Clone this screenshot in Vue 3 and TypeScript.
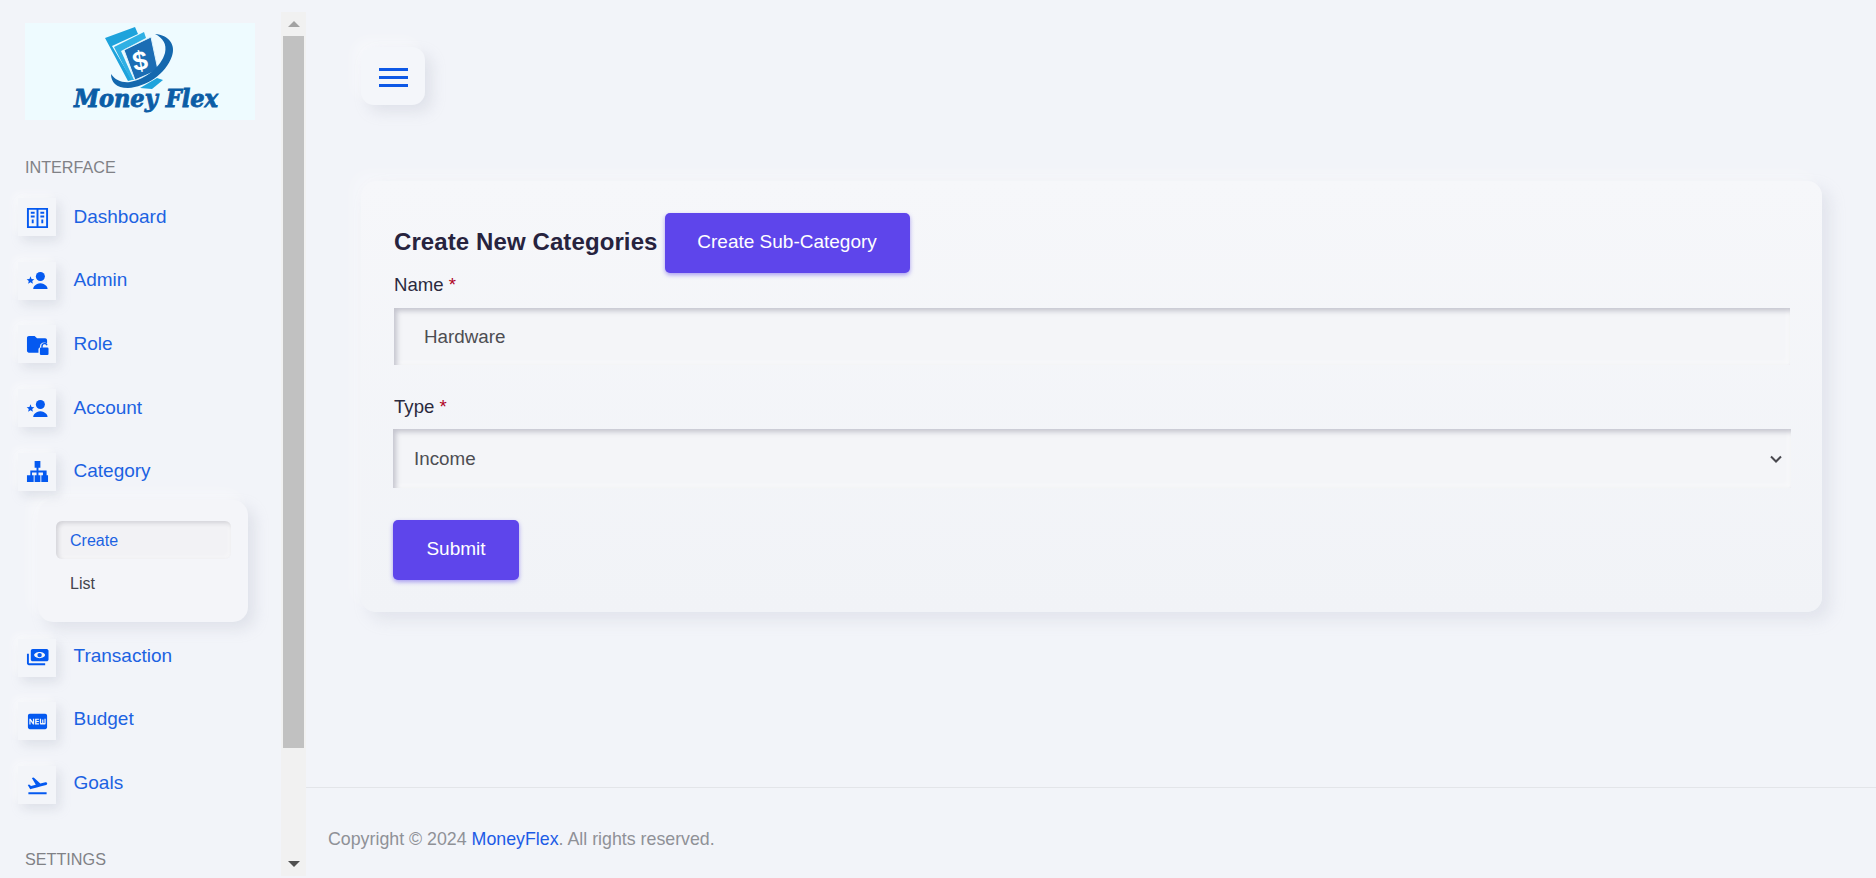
<script setup lang="ts">
interface NavItem {
  label: string
  icon: string
}
const upper: NavItem[] = [
  { label: 'Dashboard', icon: 'dash' },
  { label: 'Admin', icon: 'star' },
  { label: 'Role', icon: 'folder' },
  { label: 'Account', icon: 'star' },
  { label: 'Category', icon: 'tree' },
]
const lower: NavItem[] = [
  { label: 'Transaction', icon: 'pay' },
  { label: 'Budget', icon: 'new' },
  { label: 'Goals', icon: 'fly' },
]
</script>

<template>
  <div class="page">
    <aside class="side">
      <div class="side-content">
        <svg class="logo" viewBox="25 23 230 97" role="img" aria-label="Money Flex">
          <rect x="25" y="23" width="230" height="97" fill="#eefbff" />
          <polygon points="105,38 135,27 138,34 112,46 132,80 128,81" fill="#1ea3dc" />
          <polygon points="114,47 144,32 146,38 121,51 134,80 131,80" fill="#2fb0e4" />
          <polygon points="140,88 157,78 163,80 152,89" fill="#1ea3dc" />
          <polygon points="124,50 151,37 158,70 135,80" fill="#1b6db4" stroke="#dff4fc" stroke-width="1" />
          <path d="M155 34C169 35 176 45 172 56C166 74 146 87 128 88C116 88 111 82 111 74C115 80 122 83 130 82C146 79 161 67 165 53C167 44 163 38 155 34Z" fill="#1468ae" />
          <text x="140" y="70" class="logo-dollar" transform="rotate(-10 140 60)" text-anchor="middle">$</text>
          <text x="74" y="107" class="logo-text" textLength="144" lengthAdjust="spacingAndGlyphs">Money Flex</text>
        </svg>

        <div class="section-title first">INTERFACE</div>
        <nav class="nav">
          <a v-for="item in upper" :key="item.label" class="nav-row">
            <span class="nav-icon">
              <svg viewBox="0 0 24 24" class="ico">
                <template v-if="item.icon === 'dash'">
                  <path d="M1 2h22v21H1zM3 4v17h8V4zm10 0v17h8V4z" fill-rule="evenodd" />
                  <path d="M5 6h4v2H5zM5 10h4v2H5zM6 14h2v4H6zM15 6h4v2h-4zM15 10h4v2h-4zM16 14h2v4h-2z" />
                </template>
                <template v-else-if="item.icon === 'star'">
                  <circle cx="15" cy="7.800" r="4.700" />
                  <path d="M7.500 20.800c0-1 .3-2 1.200-3 1.500-1.900 4-3 6.300-3s4.800 1.100 6.300 3c.9 1 1.200 2 1.200 3z" />
                  <polygon points="4.700,7.500 5.800,10.400 8.700,10.600 6.500,12.500 7.200,15.400 4.700,13.800 2.200,15.400 2.900,12.500 .7,10.600 3.600,10.400" />
                </template>
                <template v-else-if="item.icon === 'folder'">
                  <path d="M3 3h6l2.500 2.500H20c1 0 2 .9 2 2v3.500a4.500 4.500 0 0 0-7.500 3.500v.5c-.8.3-1.500 1.100-1.500 2.200v3.300H3c-1 0-2-.9-2-2V5c0-1.100.9-2 2-2z" />
                  <rect x="14.500" y="15.200" width="9" height="7.800" rx="1.200" />
                  <path d="M16.700 15.500v-1.800a2.700 2.700 0 0 1 5.200-1" fill="none" stroke="#0459f0" stroke-width="1.500" />
                </template>
                <template v-else-if="item.icon === 'tree'">
                  <path d="M9 1h6v7h-2v3h8.500v5H23v7h-7v-7h1.700v-3H13v3h2v7H9v-7h2v-3H6.300v3H8v7H1v-7h3.500v-5H11V8H9z" />
                </template>
                <template v-else>
                  <path d="M9 1h6v6H9z" />
                </template>
              </svg>
            </span>
            <span class="nav-label">{{ item.label }}</span>
          </a>
        </nav>

        <div class="sub">
          <a class="sub-item active">Create</a>
          <a class="sub-item">List</a>
        </div>

        <nav class="nav lower">
          <a v-for="item in lower" :key="item.label" class="nav-row">
            <span class="nav-icon">
              <svg viewBox="0 0 24 24" class="ico">
                <template v-if="item.icon === 'pay'">
                  <path fill-rule="evenodd" d="M5 5c0-1.100.9-2 2-2h14.500c1.100 0 2 .9 2 2v9c0 1.100-.9 2-2 2H7c-1.100 0-2-.9-2-2zm9.200 1.200c-3.200 0-5.700 1.800-5.700 3.300s2.500 3.300 5.700 3.300 5.700-1.800 5.700-3.300-2.500-3.300-5.700-3.300z" />
                  <circle cx="14.200" cy="9.500" r="2.300" />
                  <path d="M1 8h2v10h17v2H3c-1.100 0-2-.9-2-2z" />
                </template>
                <path v-else-if="item.icon === 'new'" d="M20 4H4c-1.110 0-1.990.89-1.990 2L2 18c0 1.110.89 2 2 2h16c1.110 0 2-.89 2-2V6c0-1.110-.89-2-2-2zM8.500 15H7.300l-2.550-3.500V15H3.500V9h1.250l2.500 3.500V9H8.500v6zm5-4.740H11v1.120h2.500v1.260H11v1.110h2.500V15h-4V9h4v1.260zm7 3.740c0 .55-.45 1-1 1h-4c-.55 0-1-.45-1-1V9h1.250v4.510h1.130V9.990h1.250v3.510h1.120V9h1.250v5z" />
                <path v-else d="M2.500 19h19v2h-19v-2zm19.570-9.360c-.21-.8-1.040-1.280-1.840-1.060L14.920 10l-6.900-6.430-1.930.51 4.140 7.170-4.970 1.330-1.970-1.540-1.450.39 1.820 3.160.77 1.330 1.600-.43 5.310-1.420 4.350-1.160L21 11.490c.81-.23 1.280-1.050 1.070-1.850z" />
              </svg>
            </span>
            <span class="nav-label">{{ item.label }}</span>
          </a>
        </nav>

        <div class="section-title second">SETTINGS</div>
      </div>

      <div class="scrollbar">
        <div class="arrow-box"><span class="arrow up"></span></div>
        <div class="thumb"></div>
        <div class="track-rest"></div>
        <div class="arrow-box"><span class="arrow down"></span></div>
      </div>
    </aside>

    <main class="main">
      <div class="main-body">
        <button class="burger" type="button" aria-label="Menu">
          <span></span><span></span><span></span>
        </button>

        <section class="card">
          <div class="card-head">
            <h2 class="card-title">Create New Categories</h2>
            <button class="btn head-btn" type="button">Create Sub-Category</button>
          </div>
          <label class="field-label name-label">Name <em>*</em></label>
          <input class="control text-input" value="Hardware" />
          <label class="field-label type-label">Type <em>*</em></label>
          <div class="select-wrap">
            <select class="control select-input">
              <option>Income</option>
              <option>Expense</option>
            </select>
            <svg class="chevron" viewBox="0 0 12 8"><path d="M1 1.500l5 5 5-5" /></svg>
          </div>
          <button class="btn submit-btn" type="button">Submit</button>
        </section>
      </div>

      <footer class="footer">
        Copyright © 2024 <a class="brand">MoneyFlex</a>. All rights reserved.
      </footer>
    </main>
  </div>
</template>

<style scoped>
.page {
  display: flex;
  height: 878px;
  overflow: hidden;
  background: #f2f4f9;
  font-family: "Liberation Sans", Arial, sans-serif;
  color: #2b2a3d;
}
.side {
  width: 306px;
  flex: none;
  display: flex;
  overflow: hidden;
}
.side-content {
  width: 281px;
  flex: none;
  padding: 23px 0 0 25px;
  box-sizing: border-box;
}
.logo {
  display: block;
  width: 230px;
  height: 97px;
}
.logo-dollar {
  font: 700 27px "Liberation Sans", Arial, sans-serif;
  fill: #fff;
}
.logo-text {
  font: italic 900 25px "DejaVu Serif", serif;
  fill: #0b5da6;
  stroke: #0b5da6;
  stroke-width: .9px;
}
.section-title {
  font-size: 16.2px;
  line-height: 18px;
  color: #808186;
}
.section-title.first {
  margin-top: 38px;
}
.section-title.second {
  margin-top: 46px;
}
.nav {
  display: flex;
  flex-direction: column;
  gap: 25.7px;
  margin: 22px 0 0 -7px;
}
.nav.lower {
  margin-top: 17px;
}
.nav-row {
  display: flex;
  align-items: center;
  gap: 17.500px;
  height: 38px;
}
.nav-icon {
  width: 38px;
  height: 38px;
  flex: none;
  display: flex;
  align-items: center;
  justify-content: center;
  background: #f3f5f9;
  box-shadow: 4px 5px 10px rgba(170, 175, 190, .28), -4px -4px 8px rgba(255, 255, 255, .55);
}
.ico {
  width: 23px;
  height: 23px;
  fill: #0459f0;
}
.nav-label {
  font-size: 19px;
  line-height: 20px;
  color: #1c62e2;
  position: relative;
  top: -.5px;
}
.lower .nav-label {
  top: -2px;
}
.sub {
  width: 210px;
  height: 122px;
  margin: 9px 0 0 13px;
  padding: 21px 17px 0 18px;
  box-sizing: border-box;
  border-radius: 15px;
  background: #f4f5f9;
  box-shadow: 7px 7px 14px rgba(170, 175, 190, .25), -7px -7px 14px rgba(255, 255, 255, .45);
}
.sub-item {
  display: flex;
  align-items: center;
  height: 38px;
  padding: 2px 0 0 14px;
  box-sizing: border-box;
  font-size: 16px;
  color: #44444c;
  border-radius: 6px;
}
.sub-item.active {
  color: #1c62e2;
  margin-bottom: 5px;
  background: #f2f2f5;
  box-shadow: inset 2px 2px 4px rgba(160, 160, 170, .4), inset -2px -2px 4px rgba(255, 255, 255, .4);
}
.scrollbar {
  width: 25px;
  height: 864px;
  margin-top: 12px;
  flex: none;
  display: flex;
  flex-direction: column;
  background: #f1f1f1;
}
.arrow-box {
  height: 24px;
  flex: none;
  display: flex;
  align-items: center;
  justify-content: center;
}
.arrow {
  width: 0;
  height: 0;
  border-left: 6px solid transparent;
  border-right: 6px solid transparent;
}
.arrow.up {
  border-bottom: 6px solid #a3a3a3;
}
.arrow.down {
  border-top: 6px solid #505050;
}
.thumb {
  height: 712px;
  width: 21px;
  margin-left: 2px;
  background: #c1c1c1;
}
.track-rest {
  flex: 1;
}
.main {
  flex: 1;
  min-width: 0;
  display: flex;
  flex-direction: column;
}
.main-body {
  flex: 1;
  padding: 47px 54px 0 55px;
}
.burger {
  width: 64px;
  height: 58px;
  display: flex;
  flex-direction: column;
  gap: 5px;
  align-items: center;
  justify-content: center;
  padding: 2px 0 0;
  border: none;
  border-radius: 13px;
  background: #f4f6fa;
  box-shadow: 7px 7px 14px rgba(170, 175, 190, .25), -7px -7px 14px rgba(255, 255, 255, .4);
}
.burger span {
  width: 29px;
  height: 3px;
  background: #0d58e6;
}
.card {
  margin-top: 76px;
  height: 431px;
  box-sizing: border-box;
  padding: 32px 32px 0 33px;
  border-radius: 15px;
  background: linear-gradient(#f6f7fa, #f1f3f7);
  box-shadow: 8px 8px 16px rgba(170, 175, 190, .22), -8px -8px 16px rgba(255, 255, 255, .3);
}
.card-head {
  display: flex;
  align-items: center;
  gap: 7px;
}
.card-title {
  margin: 0;
  font-size: 24px;
  font-weight: 700;
  letter-spacing: .1px;
  line-height: 28px;
  color: #27233e;
  position: relative;
  top: -1px;
}
.btn {
  border: none;
  border-radius: 5px;
  background: #5e45eb;
  color: #fff;
  font-family: inherit;
  font-size: 19px;
  box-shadow: 0 2px 4px rgba(94, 69, 235, .5);
}
.head-btn {
  width: 245px;
  height: 60px;
  padding: 0 0 2px;
}
.field-label {
  display: block;
  font-size: 18.600px;
  line-height: 20px;
  color: #2b2a3d;
}
.field-label em {
  font-style: normal;
  color: #b0021f;
}
.name-label {
  margin-top: 2px;
}
.type-label {
  margin-top: 32px;
}
.control {
  display: block;
  box-sizing: border-box;
  border: none;
  outline: none;
  font-family: inherit;
  font-size: 18.800px;
  color: #4d4d52;
  background: #f4f5f8;
  box-shadow: inset 3px 3px 5px rgba(150, 150, 165, .5), inset -3px -3px 5px rgba(255, 255, 255, .45);
}
.text-input {
  width: 1396px;
  height: 57px;
  margin-top: 13px;
  padding-left: 30px;
}
.select-wrap {
  position: relative;
  width: 1398px;
  margin: 12px 0 0 -1px;
}
.select-input {
  width: 100%;
  height: 59px;
  padding-left: 21px;
  appearance: none;
}
.chevron {
  position: absolute;
  right: 9px;
  top: 26px;
  width: 12px;
  height: 8px;
  pointer-events: none;
}
.chevron path {
  fill: none;
  stroke: #48484e;
  stroke-width: 2;
}
.submit-btn {
  display: block;
  width: 126px;
  height: 60px;
  margin: 32px 0 0 -1px;
  padding: 0 0 2px;
}
.footer {
  height: 91px;
  flex: none;
  box-sizing: border-box;
  border-top: 1px solid #e3e5e9;
  padding: 41px 0 0 22px;
  font-size: 17.800px;
  line-height: 21px;
  color: #8f9197;
}
.brand {
  color: #1c5be6;
}
</style>

<style>
html, body {
  margin: 0;
  background: #f2f4f9;
}
</style>
